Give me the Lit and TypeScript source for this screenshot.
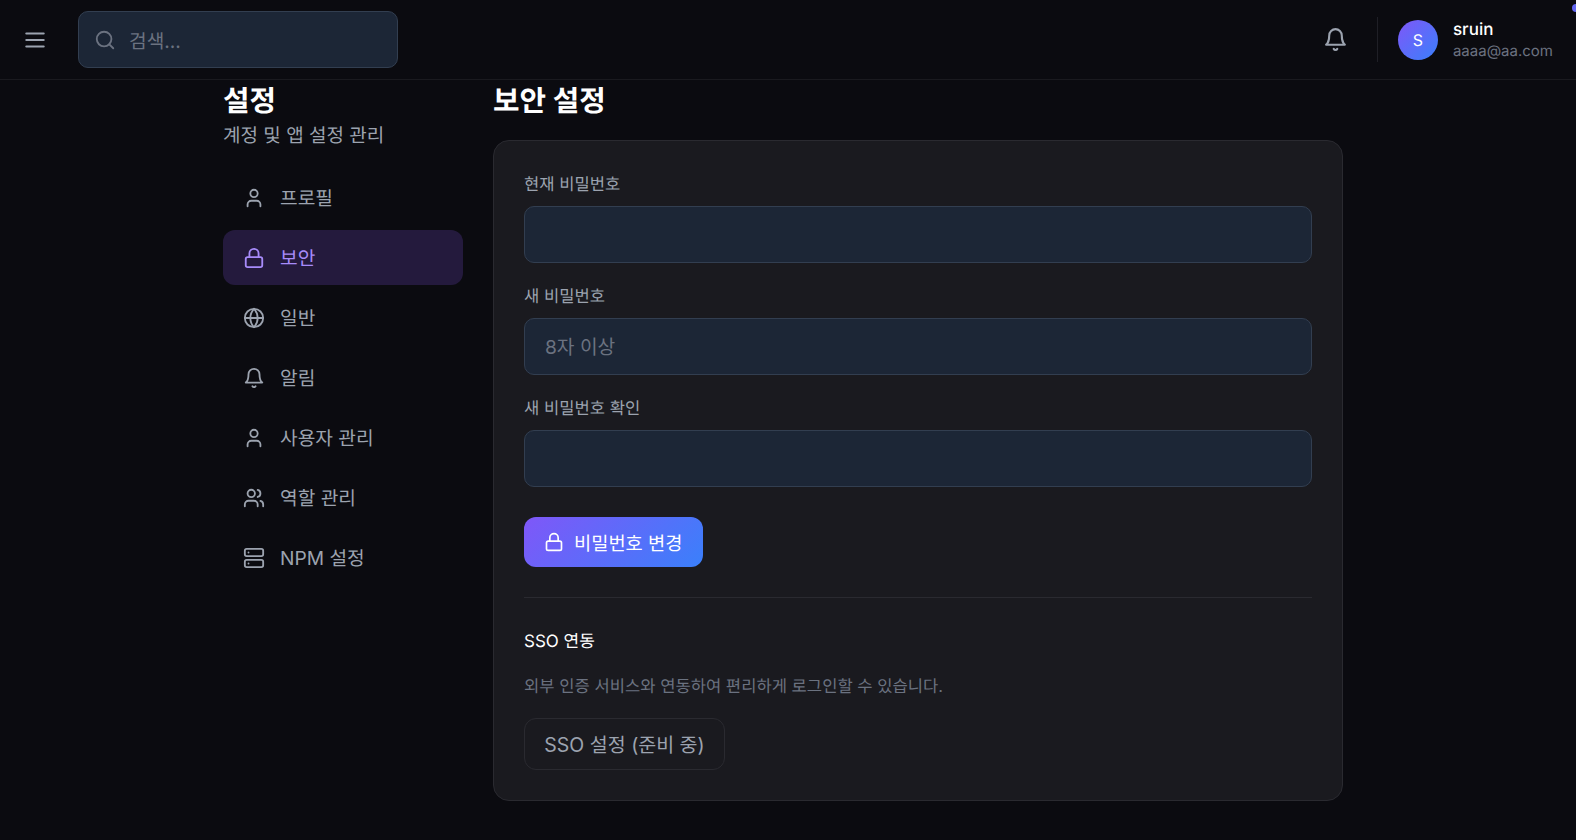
import { LitElement, html, css, svg } from 'lit';
import { customElement } from 'lit/decorators.js';

const icon = (body: unknown, size = 22) => html`<svg
  width=${size}
  height=${size}
  viewBox="0 0 24 24"
  fill="none"
  stroke="currentColor"
  stroke-width="2"
  stroke-linecap="round"
  stroke-linejoin="round"
>${body}</svg>`;

const icons = {
  menu: svg`<path d="M4 6h16M4 12h16M4 18h16"/>`,
  search: svg`<circle cx="11" cy="11" r="8"/><path d="m21 21-4.3-4.3"/>`,
  bell: svg`<path d="M6 8a6 6 0 0 1 12 0c0 7 3 9 3 9H3s3-2 3-9"/><path d="M10.3 21a1.94 1.94 0 0 0 3.4 0"/>`,
  user: svg`<path d="M19 21v-2a4 4 0 0 0-4-4H9a4 4 0 0 0-4 4v2"/><circle cx="12" cy="7" r="4"/>`,
  lock: svg`<rect x="3" y="11" width="18" height="11" rx="2" ry="2"/><path d="M7 11V7a5 5 0 0 1 10 0v4"/>`,
  globe: svg`<circle cx="12" cy="12" r="10"/><path d="M12 2a14.5 14.5 0 0 0 0 20 14.5 14.5 0 0 0 0-20"/><path d="M2 12h20"/>`,
  users: svg`<path d="M16 21v-2a4 4 0 0 0-4-4H6a4 4 0 0 0-4 4v2"/><circle cx="9" cy="7" r="4"/><path d="M22 21v-2a4 4 0 0 0-3-3.87"/><path d="M16 3.13a4 4 0 0 1 0 7.75"/>`,
  server: svg`<rect x="2" y="2" width="20" height="8" rx="2" ry="2"/><rect x="2" y="14" width="20" height="8" rx="2" ry="2"/><path d="M6 6h.01"/><path d="M6 18h.01"/>`,
};

const navItems = [
  { label: '프로필', icon: icons.user },
  { label: '보안', icon: icons.lock, active: true },
  { label: '일반', icon: icons.globe },
  { label: '알림', icon: icons.bell },
  { label: '사용자 관리', icon: icons.user },
  { label: '역할 관리', icon: icons.users },
  { label: 'NPM 설정', icon: icons.server },
];

const fields = [
  { label: '현재 비밀번호', placeholder: '' },
  { label: '새 비밀번호', placeholder: '8자 이상' },
  { label: '새 비밀번호 확인', placeholder: '' },
];

@customElement('app-root')
export class AppRoot extends LitElement {
  static styles = css`
    :host {
      display: block;
      position: relative;
      height: 840px;
      overflow: hidden;
      background: #0b0b10;
      color: #fff;
      font-family: Inter, 'Noto Sans CJK KR', sans-serif;
      text-rendering: geometricPrecision;
    }

    .dot {
      position: absolute;
      top: 4px;
      right: -4px;
      width: 8px;
      height: 8px;
      border-radius: 50%;
      background: #6366f1;
    }

    header {
      display: flex;
      align-items: center;
      height: 79px;
      border-bottom: 1px solid #1a1a1f;
      padding: 0 23px 0 22px;
    }

    .menu {
      display: flex;
      color: #9ca3af;
      margin-right: 30px;
    }

    .search {
      display: flex;
      align-items: center;
      gap: 13px;
      box-sizing: border-box;
      width: 320px;
      height: 57px;
      padding: 0 15px;
      background: #1c2636;
      border: 1px solid #323e50;
      border-radius: 10px;
      color: #6b7280;
      font-size: 19.2px;
    }

    .right {
      margin-left: auto;
      display: flex;
      align-items: center;
    }

    .bell {
      display: flex;
      color: #9ca3af;
      margin-right: 29px;
    }

    .sep {
      width: 1px;
      height: 45px;
      background: #1f1f26;
      margin-right: 20px;
    }

    .avatar {
      width: 40px;
      height: 40px;
      border-radius: 50%;
      background: linear-gradient(135deg, #7f57f8, #3a80fb);
      display: flex;
      align-items: center;
      justify-content: center;
      font-size: 16px;
      margin-right: 15px;
    }

    .who {
      display: flex;
      flex-direction: column;
      gap: 1px;
      padding-top: 2px;
    }

    .name {
      font-size: 17px;
      font-weight: 500;
      line-height: 20px;
    }

    .email {
      font-size: 15px;
      line-height: 20px;
      color: #6b7280;
    }

    .page {
      display: flex;
      gap: 30px;
      padding-left: 223px;
    }

    aside {
      width: 240px;
      flex: none;
    }

    h1 {
      margin: 0;
      font-size: 28.8px;
      line-height: 42px;
      font-weight: 700;
    }

    .sub {
      margin: 0 0 20px;
      font-size: 19px;
      line-height: 28px;
      color: #9ca3af;
    }

    nav {
      display: flex;
      flex-direction: column;
      gap: 5px;
    }

    .item {
      display: flex;
      align-items: center;
      gap: 15px;
      height: 55px;
      padding: 0 20px;
      border-radius: 12px;
      color: #9ca3af;
      font-size: 19.2px;
    }

    .item span {
      padding-bottom: 2px;
    }

    .item.active {
      background: rgba(139, 92, 246, 0.2);
      color: #a78bfa;
    }

    .item svg {
      flex: none;
    }

    main {
      width: 850px;
      flex: none;
    }

    h2 {
      margin: 0 0 18px;
      font-size: 28.8px;
      line-height: 42px;
      font-weight: 700;
    }

    .card {
      box-sizing: border-box;
      height: 661px;
      padding: 30px;
      background: #1a1a1f;
      border: 1px solid #2a2a30;
      border-radius: 16px;
    }

    .field {
      margin-bottom: 20px;
    }

    label {
      display: block;
      font-size: 16.6px;
      line-height: 28px;
      margin-bottom: 7px;
      color: #9ca3af;
    }

    input {
      display: block;
      box-sizing: border-box;
      width: 100%;
      height: 57px;
      padding: 0 20px;
      background: #1c2636;
      border: 1px solid #323e50;
      border-radius: 10px;
      color: #fff;
      font: inherit;
      font-size: 19.2px;
      outline: none;
    }

    input::placeholder {
      color: #6b7280;
    }

    .submit {
      display: flex;
      align-items: center;
      gap: 10px;
      height: 50px;
      width: 179px;
      margin-top: 30px;
      padding: 0 20px;
      box-sizing: border-box;
      border: none;
      border-radius: 12px;
      background: linear-gradient(135deg, #7f57f8, #3a80fb);
      color: #fff;
      font: inherit;
      font-size: 18.7px;
      white-space: nowrap;
    }

    .submit span {
      padding-bottom: 2px;
    }

    hr {
      margin: 30px 0 31px;
      border: none;
      border-top: 1px solid #2a2a30;
    }

    h3 {
      margin: 0 0 16px;
      font-size: 17px;
      line-height: 26px;
      font-weight: 400;
    }

    .desc {
      margin: 0 0 15px;
      font-size: 16.6px;
      line-height: 32px;
      color: #6b7280;
    }

    .sso {
      box-sizing: border-box;
      width: 201px;
      height: 52px;
      padding: 0 0 2px;
      background: transparent;
      border: 1px solid #2a2a30;
      border-radius: 12px;
      color: #9ca3af;
      font: inherit;
      font-size: 19.5px;
    }
  `;

  render() {
    return html`
      <header>
        <div class="menu">${icon(icons.menu, 26)}</div>
        <div class="search">${icon(icons.search)}<span>검색...</span></div>
        <div class="right">
          <div class="bell">${icon(icons.bell, 25)}</div>
          <div class="sep"></div>
          <div class="avatar">S</div>
          <div class="who">
            <div class="name">sruin</div>
            <div class="email">aaaa@aa.com</div>
          </div>
        </div>
      </header>
      <div class="page">
        <aside>
          <h1>설정</h1>
          <p class="sub">계정 및 앱 설정 관리</p>
          <nav>
            ${navItems.map(
              (n) => html`<div class="item ${n.active ? 'active' : ''}">${icon(n.icon)}<span>${n.label}</span></div>`
            )}
          </nav>
        </aside>
        <main>
          <h2>보안 설정</h2>
          <div class="card">
            ${fields.map(
              (f) => html`<div class="field">
                <label>${f.label}</label>
                <input type="password" placeholder=${f.placeholder} />
              </div>`
            )}
            <button class="submit">${icon(icons.lock, 20)}<span>비밀번호 변경</span></button>
            <hr />
            <h3>SSO 연동</h3>
            <p class="desc">외부 인증 서비스와 연동하여 편리하게 로그인할 수 있습니다.</p>
            <button class="sso">SSO 설정 (준비 중)</button>
          </div>
        </main>
      </div>
      <div class="dot"></div>
    `;
  }
}
